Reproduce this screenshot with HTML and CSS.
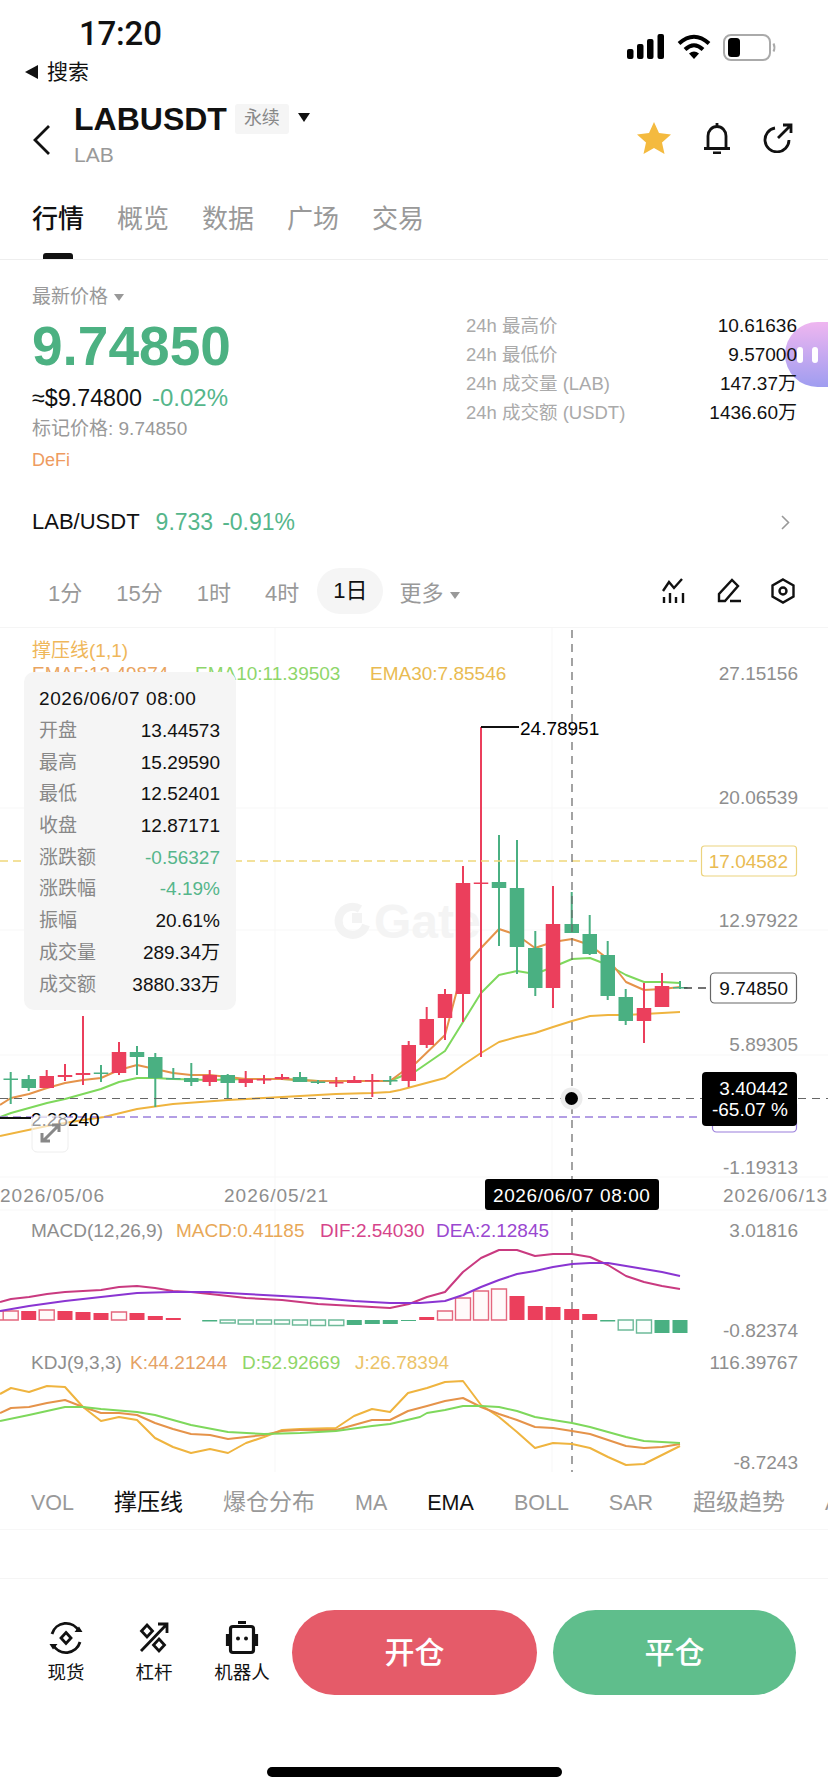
FILE: index.html
```html
<!DOCTYPE html>
<html lang="zh-CN">
<head>
<meta charset="utf-8">
<title>LABUSDT</title>
<link rel="stylesheet" href="styles.css">
</head>
<body>
<div class="page">
  <header class="status">
    <div class="status-left">
      <div class="time">17:20</div>
      <div class="back-app"><i class="tri-left"></i>搜索</div>
    </div>
    <div class="status-icons">
      <svg width="38" height="25" viewBox="0 0 38 25"><rect x="0" y="15" width="6.5" height="10" rx="2"/><rect x="10" y="10" width="6.5" height="15" rx="2"/><rect x="20" y="5" width="6.5" height="20" rx="2"/><rect x="30.500" y="0" width="6.500" height="25" rx="2"/></svg>
      <svg width="34" height="25" viewBox="0 0 34 25"><path class="wifi" d="M2 9.500Q17-4 32 9.500M8 15.500Q17 7 26 15.500"/><path d="M12 19.500L17 25l5-5.500Q17 15.500 12 19.500z"/></svg>
      <svg width="54" height="27" viewBox="0 0 54 27"><rect class="batt" x="1" y="1" width="46" height="25" rx="7"/><rect x="5" y="4" width="12" height="19" rx="3.500"/><path class="batt-cap" d="M50.500 9.500q2 4 0 8"/></svg>
    </div>
  </header>

  <nav class="nav">
    <svg class="chev" width="20" height="30" viewBox="0 0 20 30"><path d="M16 1L2 15l14 14"/></svg>
    <div class="title-col">
      <div class="title-row">
        <span class="symbol">LABUSDT</span>
        <span class="tag">永续</span>
        <i class="tri-down"></i>
      </div>
      <div class="base">LAB</div>
    </div>
    <div class="nav-actions">
      <svg width="34" height="32" viewBox="0 0 34 32"><path class="star" d="M17 0l5 11 12 1.500-9 8 2.500 11.500L17 26 6.500 32 9 20.500l-9-8L12 11z"/></svg>
      <svg class="line-icon" width="28" height="32" viewBox="0 0 28 32"><path d="M14 1v3M5 26V14a9 9.500 0 0 1 18 0v12M1 26.500h26M10 31h8"/></svg>
      <svg class="line-icon" width="30" height="30" viewBox="0 0 30 30"><path d="M12 5A12 12 0 1 0 26 17M15 15L28 2M20 2h8v8"/></svg>
    </div>
  </nav>

  <div class="tabs">
    <span class="tab active">行情</span><span class="tab">概览</span><span class="tab">数据</span><span class="tab">广场</span><span class="tab">交易</span>
  </div>

  <section class="price">
    <div class="bubble"><i></i><i></i></div>
    <div class="price-left">
      <div class="latest">最新价格<i class="tri-small"></i></div>
      <div class="big">9.74850</div>
      <div class="sub"><span class="usd">≈$9.74800</span><span class="up">-0.02%</span></div>
      <div class="mark">标记价格: 9.74850</div>
      <div class="defi">DeFi</div>
    </div>
    <div class="stats">
      <div class="stat"><span>24h 最高价</span><b>10.61636</b></div>
      <div class="stat"><span>24h 最低价</span><b>9.57000</b></div>
      <div class="stat"><span>24h 成交量 (LAB)</span><b>147.37万</b></div>
      <div class="stat"><span>24h 成交额 (USDT)</span><b>1436.60万</b></div>
    </div>
  </section>

  <div class="pair">
    <span class="pair-name">LAB/USDT</span>
    <span class="pair-num">9.733</span>
    <span class="pair-num">-0.91%</span>
    <svg class="pair-chev" width="9" height="15" viewBox="0 0 9 15"><path d="M1 1l6.500 6.500L1 14"/></svg>
  </div>

  <div class="intervals">
    <span>1分</span><span>15分</span><span>1时</span><span>4时</span><span class="pill">1日</span><span class="more">更多<i class="tri-small"></i></span>
    <div class="tool-icons">
      <svg class="line-icon thin" width="24" height="25" viewBox="0 0 24 25"><path d="M1 13L7 4l5 6 8-9M2 19v6M8 15v10M14 19v6M21 15v10"/></svg>
      <svg class="line-icon thin" width="25" height="25" viewBox="0 0 25 25"><path d="M2 23v-7L15 2l6 6L8 23H2zM13 23h11"/></svg>
      <svg class="line-icon thin" width="24" height="26" viewBox="0 0 24 26"><path d="M12 1.500L22.500 7.500v11L12 24.500 1.500 18.500v-11z"/><circle cx="12" cy="13" r="3.500"/></svg>
    </div>
  </div>

  <div class="chart">
    <svg class="chart-svg" width="828" height="852" viewBox="0 628 828 852">
      <path class="grid" d="M0 808H828M0 930H828M0 1055H828M0 1177H828M0 1210H828M275 628V1472M552 628V1472"/>

      <path class="wm-ring" d="M360 909A14 14 0 1 0 366 925"/>
      <rect class="wm-dot" x="352" y="913" width="10" height="10"/>
      <text class="wm-text" x="374" y="938">Gate</text>

      <polyline class="ema30" points="0,1136 47,1126 83,1120 104,1117 137,1109 173,1104 228,1100 282,1097 336,1094 372,1093 390,1092 400,1090 445,1078 463,1065 481,1053 499,1042 517,1037 535,1033 553,1027 572,1021 590,1016 608,1015 626,1015 644,1014 662,1013 680,1012"/>
      <polyline class="ema10" points="0,1117 11,1113 29,1108 47,1103 65,1099 83,1094 101,1089 119,1082 137,1078 155,1078 173,1079 210,1080 246,1079 282,1079 318,1081 354,1081 390,1081 409,1073 416,1071 445,1051 463,1022 481,993 499,975 517,971 535,974 553,967 572,959 590,958 608,965 626,975 644,982 662,982 680,983"/>
      <polyline class="ema5" points="0,1105 11,1098 29,1094 47,1088 65,1083 83,1080 101,1078 119,1070 137,1065 155,1069 173,1073 191,1075 210,1075 228,1077 246,1079 282,1079 318,1081 354,1081 390,1081 409,1067 416,1063 445,1035 463,968 481,948 499,929 517,935 535,948 553,942 572,939 590,945 608,959 626,982 644,990 662,989 680,987"/>

      <path class="wick-red" d="M46.700 1070V1088M65 1064V1081M83 1016V1085M119 1042V1075M209.700 1070V1086M245.700 1071V1087M264 1075V1084M282 1074V1080M336.300 1077V1087M354.300 1076V1083M372.300 1074V1097M408.700 1041V1087M426.700 1007V1048M445 989V1040M463 866V1022M481 727V1057M553 886V1008M644 983V1043M662 973V1007"/>
      <path class="body-red" d="M39.500 1076h14.500v12h-14.500zM57.750 1075h14.500v2h-14.500zM75.750 1073h14.500v2h-14.500zM111.750 1052h14.500v21h-14.500zM202.500 1075h14.500v7h-14.500zM238.500 1079h14.500v4h-14.500zM256.750 1079h14.500v1.500h-14.500zM274.750 1077h14.500v2h-14.500zM329 1082h14.500v1.500h-14.500zM347 1080h14.500v3h-14.500zM365 1080h14.500v1.500h-14.500zM401.500 1045h14.500v36h-14.500zM419.500 1019h14.500v26h-14.500zM437.750 994h14.500v24h-14.500zM455.750 883h14.500v111h-14.500zM473.750 882.500h14.500v1.500h-14.500zM545.750 924h14.500v64h-14.500zM636.750 1008h14.500v13h-14.500zM654.750 986h14.500v21h-14.500z"/>
      <path class="wick-green" d="M10.700 1072V1104M28.700 1075V1091M101 1065V1082M137 1046V1075M155.300 1053V1107M173.300 1068V1079M191.300 1063V1086M227.700 1074V1099M300 1072V1082M318 1080V1084M390.300 1076V1085M499 835V946M517 840V974M535.300 931V996M571.700 892V933M589.700 915V955M607.700 941V1000M625.700 989V1025M680 981V989"/>
      <path class="body-green" d="M3.500 1078.500h14.500v1.500h-14.500zM21.500 1079h14.500v9h-14.500zM93.750 1072.500h14.500v1.500h-14.500zM129.750 1052h14.500v5h-14.500zM148 1057h14.500v21h-14.500zM166 1078h14.500v1.500h-14.500zM184 1078h14.500v4h-14.500zM220.500 1075h14.500v8h-14.500zM292.750 1077h14.500v5h-14.500zM310.750 1081.500h14.500v1.500h-14.500zM383 1080h14.500v1.500h-14.500zM491.750 882h14.500v6h-14.500zM509.750 888h14.500v59h-14.500zM528 948h14.500v40h-14.500zM564.500 924h14.500v9h-14.500zM582.500 934h14.500v20h-14.500zM600.500 955h14.500v41h-14.500zM618.500 997h14.500v24h-14.500zM673 987h14.500v1.500h-14.500z"/>

      <path class="dash-yellow" d="M0 861H701"/>
      <path class="dash-price" d="M684 988H710"/>
      <path class="dash-cross" d="M0 1098.500H828"/>
      <path class="dash-purple" d="M0 1117H702"/>
      <path class="dash-cross" d="M572 630V1472"/>

      <path class="marker" d="M481 727H519M0 1118H31"/>
      <text class="t-black" x="520" y="735">24.78951</text>
      <text class="t-black" x="31" y="1126">2.28240</text>
      <rect class="expand" x="32" y="1116" width="36" height="36" rx="5"/>
      <path class="expand-icon" d="M44 1140L58 1126M52 1125h7v7M42 1133v8h8"/>

      <circle class="halo" cx="571.500" cy="1098.500" r="11"/>
      <circle cx="571.500" cy="1098.500" r="6.500"/>

      <text class="t-ind c-yellow" x="32" y="657">撑压线(1,1)</text>
      <text class="t c-ema5" x="32" y="680">EMA5:12.49874</text>
      <text class="t c-ema10" x="195" y="680">EMA10:11.39503</text>
      <text class="t c-ema30" x="370" y="680">EMA30:7.85546</text>

      <text class="t c-axis end" x="798" y="680">27.15156</text>
      <text class="t c-axis end" x="798" y="804">20.06539</text>
      <text class="t c-axis end" x="798" y="927">12.97922</text>
      <text class="t c-axis end" x="798" y="1051">5.89305</text>
      <text class="t c-axis end" x="798" y="1174">-1.19313</text>

      <rect class="box-yellow" x="701.500" y="846" width="95" height="30" rx="3"/>
      <text class="t c-ema30 end" x="788" y="868">17.04582</text>
      <rect class="box-price" x="710.500" y="973" width="86" height="30" rx="4"/>
      <text class="t c-dark end" x="788" y="995">9.74850</text>
      <rect class="box-purple" x="712.500" y="1100" width="84" height="32" rx="4"/>
      <rect x="702" y="1072" width="95" height="54" rx="4"/>
      <text class="t c-white end" x="788" y="1095">3.40442</text>
      <text class="t c-white end" x="788" y="1116">-65.07 %</text>

      <text class="t date c-axis" x="0" y="1202">2026/05/06</text>
      <text class="t date c-axis" x="224" y="1202">2026/05/21</text>
      <text class="t date c-axis" x="723" y="1202">2026/06/13</text>
      <rect x="485" y="1179" width="174" height="31" rx="3"/>
      <text class="t datetime c-white" x="493" y="1202">2026/06/07 08:00</text>

      <text class="t c-axis" x="31" y="1237">MACD(12,26,9)</text>
      <text class="t c-macd" x="176" y="1237">MACD:0.41185</text>
      <text class="t c-dif" x="320" y="1237">DIF:2.54030</text>
      <text class="t c-dea" x="436" y="1237">DEA:2.12845</text>
      <text class="t c-axis end" x="798" y="1237">3.01816</text>
      <text class="t c-axis end" x="798" y="1337">-0.82374</text>

      <path class="body-red" d="M21.200 1311h15v9h-15zM57.500 1311h15v9h-15zM75.500 1312h15v8h-15zM93.500 1313h15v7h-15zM129.500 1313h15v7h-15zM147.800 1316h15v4h-15zM165.800 1318h15v2h-15zM419.200 1317h15v3h-15zM509.500 1296h15v24h-15zM527.800 1306h15v14h-15zM545.500 1307h15v13h-15zM564.200 1309h15v11h-15zM582.200 1314h15v6h-15z"/>
      <path class="hollow-red" d="M-11.800 1311h15v9h-15zM3.200 1311h15v9h-15zM39.200 1310h15v10h-15zM111.500 1312h15v8h-15zM437.500 1311h15v9h-15zM455.500 1298h15v22h-15zM473.500 1291h15v29h-15zM491.500 1289h15v31h-15z"/>
      <path class="hollow-green" d="M220.200 1320h15v3h-15zM238.200 1320h15v4h-15zM256.500 1320h15v4h-15zM274.500 1320h15v4h-15zM292.500 1320h15v5h-15zM310.500 1320h15v5.500h-15zM328.800 1320h15v5.500h-15zM618.200 1320h15v10h-15zM636.500 1320h15v13h-15z"/>
      <path class="body-green" d="M346.800 1320h15v5h-15zM364.800 1320h15v4h-15zM382.800 1320h15v4h-15zM654.500 1320h15v13h-15zM672.500 1320h15v13h-15zM202.200 1320h15v1.500h-15zM401 1320h15v1h-15zM600.200 1320h15v1.500h-15z"/>
      <polyline class="dif" points="0,1302 11,1299 29,1297 47,1294 65,1292 83,1291 101,1290 119,1287 137,1286 155,1288 173,1291 191,1292 210,1294 228,1296 246,1298 282,1300 318,1304 354,1306 390,1308 409,1304 427,1297 445,1292 463,1272 481,1258 499,1250 517,1250 535,1256 553,1254 572,1254 590,1257 608,1265 626,1276 644,1282 662,1286 680,1289"/>
      <polyline class="dea" points="0,1311 29,1306 65,1301 101,1297 137,1293 173,1292 210,1292 246,1294 282,1296 318,1298 354,1301 390,1303 420,1303 445,1301 463,1295 481,1287 499,1280 517,1274 535,1271 553,1267 572,1264 590,1263 608,1263 626,1266 644,1269 662,1272 680,1276"/>

      <text class="t c-axis" x="31" y="1369">KDJ(9,3,3)</text>
      <text class="t c-k" x="130" y="1369">K:44.21244</text>
      <text class="t c-d" x="242" y="1369">D:52.92669</text>
      <text class="t c-j" x="355" y="1369">J:26.78394</text>
      <text class="t c-axis end" x="798" y="1369">116.39767</text>
      <text class="t c-axis end" x="798" y="1469">-8.7243</text>
      <polyline class="ema30" points="0,1394 11,1388 29,1392 47,1386 65,1387 83,1407 101,1421 119,1417 137,1420 155,1438 173,1447 191,1453 210,1449 228,1453 246,1443 264,1437 282,1430 300,1429 336,1428 354,1416 372,1409 390,1412 408,1393 427,1388 445,1382 463,1381 481,1405 499,1417 517,1432 535,1448 553,1443 572,1444 590,1448 608,1457 626,1465 644,1464 662,1455 680,1446"/>
      <polyline class="ema5" points="0,1413 11,1408 29,1407 47,1403 65,1400 83,1407 101,1413 119,1413 137,1415 155,1423 173,1429 191,1434 210,1435 228,1439 246,1437 264,1435 282,1431 300,1430 336,1430 354,1425 372,1420 390,1420 408,1411 427,1406 445,1401 463,1398 481,1407 499,1414 517,1420 535,1427 553,1428 572,1431 590,1434 608,1440 626,1446 644,1448 662,1447 680,1444"/>
      <polyline class="ema10" points="0,1421 29,1415 47,1411 65,1407 83,1407 101,1409 137,1412 155,1415 191,1425 228,1432 264,1434 300,1433 336,1431 372,1426 390,1424 420,1417 427,1413 445,1410 463,1406 481,1406 499,1407 517,1411 535,1417 553,1420 572,1423 590,1427 608,1432 626,1437 644,1441 662,1442 680,1443"/>
    </svg>

    <div class="tooltip">
      <div class="tip-date">2026/06/07 08:00</div>
      <div class="tip-row"><span>开盘</span><b>13.44573</b></div>
      <div class="tip-row"><span>最高</span><b>15.29590</b></div>
      <div class="tip-row"><span>最低</span><b>12.52401</b></div>
      <div class="tip-row"><span>收盘</span><b>12.87171</b></div>
      <div class="tip-row"><span>涨跌额</span><b class="up">-0.56327</b></div>
      <div class="tip-row"><span>涨跌幅</span><b class="up">-4.19%</b></div>
      <div class="tip-row"><span>振幅</span><b>20.61%</b></div>
      <div class="tip-row"><span>成交量</span><b>289.34万</b></div>
      <div class="tip-row"><span>成交额</span><b>3880.33万</b></div>
    </div>
  </div>

  <div class="indicators">
    <span>VOL</span><span class="on cjk">撑压线</span><span class="cjk">爆仓分布</span><span>MA</span><span class="on">EMA</span><span>BOLL</span><span>SAR</span><span class="cjk">超级趋势</span><span>ADX</span>
  </div>
  <div class="spacer"></div>

  <footer class="bottom">
    <div class="tool">
      <svg class="line-icon tool-svg" width="32" height="34" viewBox="0 0 32 34"><path d="M2 13A14.560 14.560 0 0 1 29 10.400M30 21A14.560 14.560 0 0 1 3 23.600"/><path class="fill-black" d="M24.500 11h8l-3.500-5.500zM7.500 23H-.500l3.500 5.500z"/><path d="M16 11.500l5 5.500-5 5.500-5-5.500z"/></svg>
      <span>现货</span>
    </div>
    <div class="tool">
      <svg class="line-icon tool-svg" width="32" height="34" viewBox="0 0 32 34"><path d="M3 30L29 3M20 3h9v9M9 4l5.500 6-5.500 6-5.500-6zM21 18l5.500 6-5.500 6-5.500-6z"/></svg>
      <span>杠杆</span>
    </div>
    <div class="tool">
      <svg class="line-icon tool-svg robot" width="32" height="34" viewBox="0 0 32 34"><rect x="4.500" y="5.500" width="23" height="26" rx="2.500"/><path d="M12 1.500h8M1.500 13v12M30.500 13v12"/><circle class="fill-black" cx="12" cy="17.500" r="2"/><circle class="fill-black" cx="20" cy="17.500" r="2"/></svg>
      <span>机器人</span>
    </div>
    <div class="btn btn-open">开仓</div>
    <div class="btn btn-close">平仓</div>
  </footer>
  <div class="home"></div>
</div>
</body>
</html>
```

FILE: styles.css
```css
* { box-sizing: border-box; }
html, body { margin: 0; padding: 0; background: #fff; }
body { font-family: "Liberation Sans", "Noto Sans CJK SC", sans-serif; color: #111; }
i { display: inline-block; font-style: normal; }
.page { width: 828px; height: 1792px; overflow: hidden; position: relative; }

/* status bar */
.status { height: 92px; display: flex; justify-content: space-between; padding: 18px 51px 0 25px; }
.time { font-family: Roboto, "Liberation Sans", sans-serif; font-weight: 500; font-size: 33px; line-height: 32px; margin-left: 54px; letter-spacing: -.2px; }
.back-app { display: flex; align-items: center; gap: 9px; font-size: 21px; line-height: 24px; margin-top: 10px; }
.tri-left { width: 0; height: 0; border-style: solid; border-width: 7px 13px 7px 0; border-color: transparent #111 transparent transparent; }
.status-icons { display: flex; align-items: flex-start; gap: 12px; margin-top: 16px; }
.wifi { fill: none; stroke: #000; stroke-width: 4; }
.batt { fill: none; stroke: #aaa; stroke-width: 2; }
.batt-cap { fill: none; stroke: #aaa; stroke-width: 2; }

/* nav */
.nav { height: 78px; display: flex; align-items: center; padding: 0 35px 0 33px; position: relative; }
.chev { fill: none; stroke: #111; stroke-width: 2.800; margin-top: 18px; }
.chev path { fill: none; }
.title-col { margin: 8px 0 0 21px; }
.title-row { display: flex; align-items: center; height: 32px; }
.symbol { font-size: 32px; font-weight: 700; line-height: 32px; }
.tag { background: #f5f5f5; color: #888; font-size: 18px; width: 54px; height: 30px; line-height: 28px; text-align: center; border-radius: 3px; margin-left: 8px; }
.tri-down { width: 0; height: 0; border-style: solid; border-width: 9px 6.5px 0; border-color: #111 transparent transparent; margin: -3px 0 0 9px; }
.base { color: #999; font-size: 21px; line-height: 24px; margin-top: 8px; }
.nav-actions { margin-left: auto; margin-top: 14px; display: flex; align-items: center; gap: 32px; }
.star { fill: #f4ba3f; }
.line-icon { fill: none; stroke: #111; stroke-width: 2.8; }
.line-icon.thin { stroke-width: 2.4; }

/* tabs */
.tabs { height: 90px; display: flex; gap: 33px; padding: 34px 0 0 32px; border-bottom: 1px solid #eee; position: relative; font-size: 26px; line-height: 30px; color: #999; }
.tab.active { color: #111; font-weight: 500; }
.tab.active::after { content: ""; position: absolute; left: 43px; bottom: 0; width: 30px; height: 6px; border-radius: 3px 3px 0 0; background: #111; }

/* price */
.price { height: 230px; display: flex; position: relative; padding-left: 32px; }
.price-left { width: 434px; padding-top: 25px; }
.latest { color: #999; font-size: 19px; line-height: 24px; }
.tri-small { width: 0; height: 0; border-style: solid; border-width: 7px 5.5px 0; border-color: #999 transparent transparent; margin-left: 6px; vertical-align: 2px; }
.big { color: #4cb182; font-size: 55px; font-weight: 700; line-height: 56px; margin-top: 9px; }
.sub { margin-top: 10px; line-height: 28px; display: flex; gap: 10px; }
.usd { font-size: 23.300px; }
.sub .up { font-size: 24px; }
.up { color: #55b68b; }
.mark { color: #999; font-size: 19px; line-height: 24px; margin-top: 5px; }
.defi { color: #ee9b60; font-size: 18px; line-height: 24px; margin-top: 7px; }
.stats { width: 331px; padding-top: 51px; position: relative; }
.stat { display: flex; justify-content: space-between; height: 29px; line-height: 29px; font-size: 19px; }
.stat span { color: #aaa; font-size: 18.500px; }
.stat b { font-weight: 400; color: #111; }
.bubble { position: absolute; left: 785px; top: 62px; width: 86px; height: 65px; border-radius: 33px; background: linear-gradient(#efb6f0, #9f9df0); display: flex; gap: 9px; align-items: center; padding-left: 12px; }
.bubble i { width: 6px; height: 16px; border-radius: 3px; background: #fff; }

/* pair */
.pair { height: 64px; display: flex; align-items: center; gap: 16px; padding: 0 38px 0 32px; font-size: 23px; }
.pair-name { font-size: 22px; }
.pair-num { color: #55b68b; margin-right: -7px; }
.pair-chev { margin-left: auto; fill: none; stroke: #999; stroke-width: 1.600; }

/* intervals */
.intervals { height: 74px; display: flex; align-items: center; gap: 34px; padding: 0 33.500px 0 48px; font-size: 22px; color: #999; border-bottom: 1px solid #f5f5f5; }
.pill { background: #f5f5f5; color: #111; height: 46px; line-height: 46px; border-radius: 23px; padding: 0 16px; margin: 0 -16px; }
.more { margin-left: -2px; }
.tool-icons { margin-left: auto; display: flex; gap: 31px; align-items: center; }
.tool-icons svg:last-child { margin-left: -2.500px; }

/* chart */
.chart { position: relative; height: 844px; overflow: hidden; }
.chart-svg { display: block; }
.grid { fill: none; stroke: #f7f7f7; stroke-width: 1; }
.wm-ring { fill: none; stroke: #f3f3f3; stroke-width: 8; }
.wm-dot { fill: #f3f3f3; }
.wm-text { font-size: 48px; font-weight: 700; fill: #f4f4f4; }
polyline { fill: none; stroke-width: 2; stroke-linejoin: round; }
.ema5 { stroke: #e5934a; }
.ema10 { stroke: #7ed85c; }
.ema30 { stroke: #efb43f; }
.dif { stroke: #c93a80; }
.dea { stroke: #8a35d2; }
.wick-red { fill: none; stroke: #eb3f5c; stroke-width: 2; }
.body-red { fill: #eb3f5c; }
.wick-green { fill: none; stroke: #4ab082; stroke-width: 2; }
.body-green { fill: #4ab082; }
.hollow-red { fill: #fffafa; stroke: #e4677e; stroke-width: 1.400; }
.hollow-green { fill: #fbfffd; stroke: #6dba99; stroke-width: 1.400; }
.dash-yellow { stroke: #efd77b; stroke-width: 1.500; stroke-dasharray: 8 5; fill: none; }
.dash-price { stroke: #444; stroke-width: 1.500; stroke-dasharray: 8 6; fill: none; }
.dash-cross { stroke: #666; stroke-width: 1.200; stroke-dasharray: 8 6; fill: none; }
.dash-purple { stroke: #9a7fdc; stroke-width: 1.500; stroke-dasharray: 8 5; fill: none; }
.marker { stroke: #111; stroke-width: 2; fill: none; }
.halo { fill: #ececec; }
.expand { fill: #fff; fill-opacity: .6; stroke: #eee; }
.expand-icon { fill: none; stroke: #888; stroke-width: 3; }
text { font-family: "Liberation Sans", "Noto Sans CJK SC", sans-serif; }
.t { font-size: 19px; }
.t-black { font-size: 19px; fill: #000; }
.t-ind { font-size: 19px; }
.end { text-anchor: end; }
.date { letter-spacing: 1px; }
.datetime { letter-spacing: .6px; }
.c-yellow { fill: #efb75a; }
.c-ema5 { fill: #e9a45f; }
.c-ema10 { fill: #8ed66a; }
.c-ema30 { fill: #e9bb52; }
.c-axis { fill: #8e8e8e; }
.c-dark { fill: #111; }
.c-white { fill: #fff; }
.c-macd { fill: #e8a857; }
.c-dif { fill: #d6448a; }
.c-dea { fill: #9a48d0; }
.c-k { fill: #e5a265; }
.c-d { fill: #8fd668; }
.c-j { fill: #ebc368; }
.box-yellow { fill: #fff; stroke: #ecd37e; stroke-width: 1.200; }
.box-price { fill: #fff; stroke: #666; stroke-width: 1.200; }
.box-purple { fill: #fff; stroke: #9a7fdc; stroke-width: 1.200; }

.tooltip { position: absolute; left: 24px; top: 44px; width: 212px; height: 338px; background: #f5f5f5; border-radius: 10px; padding: 11px 16px 0 15px; font-size: 19px; }
.tip-date { line-height: 32px; letter-spacing: .6px; color: #111; }
.tip-row { display: flex; justify-content: space-between; height: 31.700px; line-height: 31.700px; }
.tip-row span { color: #888; }
.tip-row b { font-weight: 400; color: #111; }
.tip-row b.up { color: #55b68b; }

/* indicator tabs */
.indicators { height: 58px; display: flex; align-items: baseline; gap: 40px; padding: 11px 0 0 31px; font-size: 21.500px; color: #999; white-space: nowrap; overflow: hidden; border-bottom: 1px solid #f7f7f7; }
.indicators .cjk { font-size: 23px; }
.indicators .on { color: #111; }
.indicators span { flex: none; }
.spacer { height: 49px; border-bottom: 1px solid #f5f5f5; }

/* bottom */
.bottom { display: flex; padding: 31px 32px 0 22px; height: 116px; }
.tool { width: 88px; padding-top: 11px; display: flex; flex-direction: column; align-items: center; font-size: 18.500px; line-height: 22px; }
.tool-svg { display: block; margin-bottom: 7px; overflow: visible; }
.robot { stroke-width: 3.200; }
.fill-black { fill: #111; stroke: none; }
.btn { height: 85px; border-radius: 42.500px; color: #fff; font-size: 30px; line-height: 85px; text-align: center; font-weight: 500; }
.btn-open { width: 245px; background: #e55b69; margin-left: 6px; }
.btn-close { width: 243px; background: #5fbe8c; margin-left: 16px; }
.home { width: 295px; height: 10px; margin: 72px auto 0; background: #000; border-radius: 5px; }
```
